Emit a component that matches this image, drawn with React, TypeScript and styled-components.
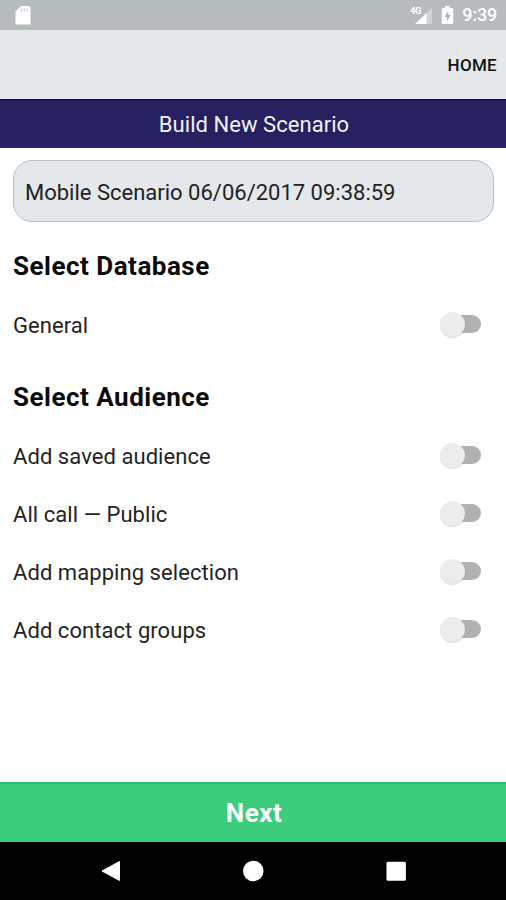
import React from "react";
import styled, { createGlobalStyle } from "styled-components";

const GlobalStyle = createGlobalStyle`
  *, *::before, *::after { box-sizing: border-box; }
  body { margin: 0; background: #fff; }
`;

const Screen = styled.div`
  display: flex;
  flex-direction: column;
  width: 506px;
  height: 900px;
  overflow: hidden;
  background: #fff;
  color: #161616;
  font-family: Roboto, "Liberation Sans", sans-serif;
`;

const StatusBar = styled.div`
  display: flex;
  align-items: center;
  height: 30px;
  flex: none;
  padding: 0 9px 0 14px;
  background: #b6bbbe;
`;

const StatusIcons = styled.div`
  display: flex;
  align-items: center;
  gap: 8px;
  margin-left: auto;
`;

const Clock = styled.span`
  color: #fff;
  font-size: 18px;
  font-weight: 500;
  line-height: 32px;
  letter-spacing: -0.2px;
`;

const Header = styled.header`
  display: flex;
  align-items: center;
  justify-content: flex-end;
  height: 69px;
  flex: none;
  padding: 1px 9px 0;
  background: #e4e8eb;
`;

const HomeButton = styled.button`
  padding: 0;
  border: 0;
  background: none;
  color: #111;
  font: 500 17px/20px Roboto, sans-serif;
  letter-spacing: 0.3px;
`;

const TitleBar = styled.h1`
  height: 49px;
  flex: none;
  margin: 0;
  padding-left: 2px;
  border-top: 1px solid #0d0845;
  background: #261f60;
  color: #f3f2f8;
  font-size: 22px;
  font-weight: 400;
  line-height: 50px;
  letter-spacing: 0.05px;
  text-align: center;
`;

const Form = styled.main`
  display: flex;
  flex-direction: column;
  flex: 1;
  padding: 12px 12px 0 13px;
`;

const NameField = styled.input`
  width: 100%;
  height: 62px;
  padding: 2px 11px 0;
  border: 1px solid #b9bec1;
  border-radius: 19px;
  background: #e4e8eb;
  color: #222;
  font: 400 22px/28px Roboto, sans-serif;
  outline: none;
`;

const SectionTitle = styled.h2`
  margin: 0;
  padding-top: 15px;
  height: 73px;
  color: #0c0c0c;
  font-size: 26px;
  font-weight: 700;
  line-height: 58px;
  letter-spacing: 0.5px;
`;

const Row = styled.div`
  display: flex;
  align-items: center;
  justify-content: space-between;
  height: 58px;
  padding-right: 13px;
`;

const RowLabel = styled.span`
  padding-top: 3px;
  color: #242424;
  font-size: 22px;
  line-height: 28px;
  letter-spacing: 0.06px;
`;

const Switch = styled.button`
  display: flex;
  align-items: center;
  width: 41px;
  height: 26px;
  padding: 0;
  border: 0;
  background: none;
`;

const Track = styled.span`
  display: flex;
  align-items: center;
  width: 35px;
  height: 18px;
  margin-left: 6px;
  border-radius: 9px;
  background: #b1b1b1;
`;

const Knob = styled.span`
  flex: none;
  width: 25px;
  height: 25px;
  margin-left: -6px;
  border-radius: 50%;
  background: #ececec;
  box-shadow: 0 1px 1px rgba(0, 0, 0, 0.14);
`;

const NextButton = styled.button`
  height: 60px;
  flex: none;
  padding: 0 0 0 2px;
  border: 0;
  border-top: 2px solid #2fbd6b;
  background: #3bcd7c;
  color: #fff;
  font: 700 26px/56px Roboto, sans-serif;
  letter-spacing: 0.5px;
`;

const NavBar = styled.nav`
  display: grid;
  grid-template-columns: repeat(3, 143px);
  justify-content: center;
  justify-items: center;
  align-items: center;
  height: 58px;
  flex: none;
  background: #000;
`;

const Toggle = ({ label }: { label: string }) => (
  <Row>
    <RowLabel>{label}</RowLabel>
    <Switch role="switch" aria-checked={false} aria-label={label}>
      <Track>
        <Knob />
      </Track>
    </Switch>
  </Row>
);

const audiences = [
  "Add saved audience",
  "All call — Public",
  "Add mapping selection",
  "Add contact groups",
];

export default function App() {
  return (
    <Screen>
      <GlobalStyle />
      <StatusBar>
        <svg width="18" height="20" viewBox="0 0 18 20">
          <path d="M7 1h8a1.500 1.500 0 0 1 1.500 1.500v15.500a1.500 1.500 0 0 1-1.500 1.500H3a1.500 1.500 0 0 1-1.500-1.500V6.500z" fill="#fff" />
          <path d="M7.500 3.500v3M10.300 3.500v3M13 3.500v3" stroke="#c9cdcf" strokeWidth="1.200" />
        </svg>
        <StatusIcons>
          <svg width="23" height="20" viewBox="0 0 23 20">
            <path d="M22 3v16H5z" fill="#d0d4d6" />
            <path d="M16.500 8.200V19H5z" fill="#fff" />
            <text x="0" y="9" fill="#fff" fontFamily="Roboto" fontSize="9.500" fontWeight="700" letterSpacing="-0.500">4G</text>
          </svg>
          <svg width="13" height="20" viewBox="0 0 13 20">
            <path d="M4 1h5v2h2a1.300 1.300 0 0 1 1.300 1.300v13.400A1.300 1.300 0 0 1 11 19H2a1.300 1.300 0 0 1-1.300-1.300V4.300A1.300 1.300 0 0 1 2 3h2z" fill="#fff" />
            <path d="M7.300 6L3.500 12h2.400v4.500L9.700 10H7.300z" fill="#adb2b5" />
          </svg>
          <Clock>9:39</Clock>
        </StatusIcons>
      </StatusBar>
      <Header>
        <HomeButton>HOME</HomeButton>
      </Header>
      <TitleBar>Build New Scenario</TitleBar>
      <Form>
        <NameField aria-label="Scenario name" defaultValue="Mobile Scenario 06/06/2017 09:38:59" />
        <SectionTitle>Select Database</SectionTitle>
        <Toggle label="General" />
        <SectionTitle>Select Audience</SectionTitle>
        {audiences.map((name) => (
          <Toggle key={name} label={name} />
        ))}
      </Form>
      <NextButton>Next</NextButton>
      <NavBar>
        <svg width="22" height="22" viewBox="0 0 22 22">
          <path d="M20.500 1.500v19L3 11z" fill="#fff" stroke="#fff" strokeLinejoin="round" />
        </svg>
        <svg width="22" height="22" viewBox="0 0 22 22">
          <circle cx="11.300" cy="11" r="10.300" fill="#fff" />
        </svg>
        <svg width="20" height="20" viewBox="0 0 20 20">
          <rect x="0.500" y="0.800" width="19.400" height="19" rx="1.500" fill="#fff" />
        </svg>
      </NavBar>
    </Screen>
  );
}
